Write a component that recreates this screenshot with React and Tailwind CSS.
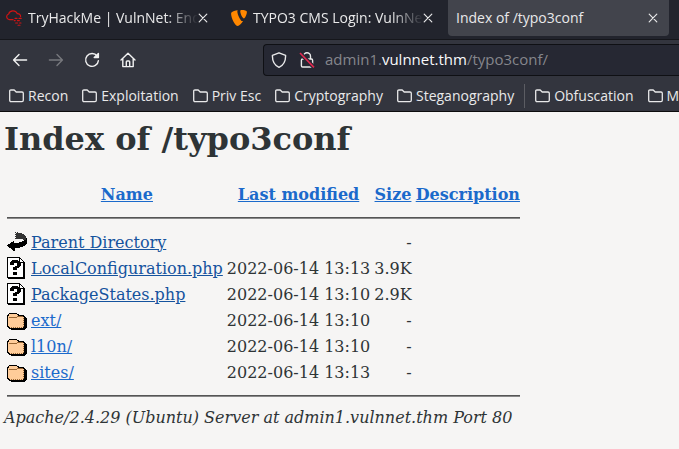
import React from "react";
import { SiTypo3 } from "react-icons/si";

const tabs = [
  { title: "TryHackMe | VulnNet: Endg", icon: "thm" },
  { title: "TYPO3 CMS Login: VulnNet", icon: "typo3" },
  { title: "Index of /typo3conf", active: true },
];

const bookmarks = ["Recon", "Exploitation", "Priv Esc", "Cryptography", "Steganography"];
const moreBookmarks = ["Obfuscation", "Misc"];

const files = [
  { icon: "back", name: "Parent Directory", date: "", size: "-", visited: true },
  { icon: "unknown", name: "LocalConfiguration.php", date: "2022-06-14 13:13", size: "3.9K", visited: true },
  { icon: "unknown", name: "PackageStates.php", date: "2022-06-14 13:10", size: "2.9K", visited: true },
  { icon: "folder", name: "ext/", date: "2022-06-14 13:10", size: "-" },
  { icon: "folder", name: "l10n/", date: "2022-06-14 13:10", size: "-" },
  { icon: "folder", name: "sites/", date: "2022-06-14 13:13", size: "-" },
];

function CloseIcon() {
  return (
    <svg viewBox="0 0 10 10" className="size-2.5" fill="none" stroke="currentColor" strokeWidth="1.2" strokeLinecap="round">
      <path d="M1.2 1.2 8.8 8.8M8.8 1.2 1.2 8.8" />
    </svg>
  );
}

function CloudLogo() {
  return (
    <svg viewBox="0 0 16 16" className="mr-1.5 size-4 shrink-0" fill="none" stroke="#cf1414" strokeWidth="1.2" strokeLinecap="round">
      <path d="M7 9.6H3.3A2.9 2.9 0 0 1 2.6 4 4.6 4.6 0 0 1 11.2 3.6 3 3 0 0 1 14.6 6.6" />
      <path d="M9 8.4H11M13 8.4H15.2M8.2 10.6H9.2M11.4 10.6H13.4M9.6 13H11.6M13.6 13H15M12 15.2H14" strokeWidth="1.1" />
    </svg>
  );
}

function Tab({ tab }) {
  return (
    <div
      className={
        "flex h-9 w-[221px] shrink-0 items-center rounded-b pr-[11px] pl-2 " +
        (tab.active ? "bg-[#42444c]" : "")
      }
    >
      {tab.icon === "thm" && <CloudLogo />}
      {tab.icon === "typo3" && <SiTypo3 className="mr-1.5 size-4 shrink-0 text-[#ff8700]" />}
      <button
        type="button"
        className={
          "min-w-0 flex-1 overflow-hidden text-left whitespace-nowrap " +
          (tab.active ? "" : "[mask-image:linear-gradient(to_left,transparent,black_32px)]")
        }
      >
        {tab.title}
      </button>
      <button type="button" aria-label="Close tab" className="shrink-0">
        <CloseIcon />
      </button>
    </div>
  );
}

function NavButton({ label, dim, children }) {
  return (
    <button
      type="button"
      aria-label={label}
      className={"flex size-8 shrink-0 items-center justify-center " + (dim ? "text-[#77787d]" : "text-[#f1f1f1]")}
    >
      <svg viewBox="0 0 16 16" className="size-4" fill="none" stroke="currentColor" strokeWidth="1.4" strokeLinecap="round" strokeLinejoin="round">
        {children}
      </svg>
    </button>
  );
}

function Bookmark({ label }) {
  return (
    <a href="#" className="flex shrink-0 items-center gap-1">
      <svg viewBox="0 0 15 14" className="h-3.5 w-[15px]" fill="none" stroke="currentColor" strokeWidth="1.3" strokeLinejoin="round">
        <path d="M.7 11.3V2.2Q.7 1 1.9 1H5.2L7.2 3H13Q14.3 3 14.3 4.2V11.3Q14.3 12.6 13 12.6H2Q.7 12.6 .7 11.3Z" />
      </svg>
      {label}
    </a>
  );
}

function FileIcon({ type }) {
  return (
    <svg viewBox="0 0 20 22" className="block h-[22px] w-5" shapeRendering="crispEdges">
      {type === "folder" && (
        <>
          <path fill="#000" d="M2 4H10V5H12V6H17V7H18V8H19V9H20V19H19V20H18V21H4V20H2V19H1V18H0V6H1V5H2Z" />
          <path fill="#fc9" d="M2 5H10V6H11V7H16V8H17V18H16V19H3V18H2V17H1V7H2Z" />
          <path fill="#963" d="M2 8H10V9H2ZM10 7H16V8H10ZM16 9h1v1h-1zM16 11h1v1h-1zM16 13h1v1h-1zM16 15h1v1h-1zM4 18h1v1h-1zM6 18h1v1h-1zM8 18h1v1h-1zM10 18h1v1h-1zM12 18h1v1h-1zM14 18h1v1h-1zM16 17h1v1h-1z" />
        </>
      )}
      {type === "unknown" && (
        <>
          <path fill="#000" d="M0 0H13V1H14V2H15V3H16V4H17V5H18V22H1V21H0Z" />
          <path fill="#fff" d="M1 1H12V6H16V20H1Z" />
          <path fill="#fff" d="M13 2H14V3H15V4H16V5H13Z" />
          <path fill="#000" d="M5 3H11V4H13V5H14V9H13V10H12V11H10V13H6V10H8V9H10V6H7V8H3V5H4V4H5ZM6 15H10V18H6Z" />
        </>
      )}
      {type === "back" && (
        <>
          <path fill="#333" d="M8 1H9V2H10V1H11V2H15V3H17V4H18V5H19V7H20V9H16V8H8V7H9V6H8V5H9V4H8V3H9V2H8Z" />
          <path fill="#000" d="M19 7H20V13H19V14H18V15H16V16H13V17H8V20H6V19H5V18H4V17H2V16H1V15H0V14H1V13H3V12H4V11H6V10H7V12H12V11H15V10H17V9H19Z" />
        </>
      )}
    </svg>
  );
}

function HeaderLink({ children }) {
  return (
    <th className="p-px align-middle font-bold">
      <a href="#" className="text-[#1b6acb] underline">{children}</a>
    </th>
  );
}

function Rule() {
  return (
    <tr>
      <th colSpan={5} className="p-px">
        <hr className="my-2 h-0.5 border-t border-b border-t-[#555] border-b-[#888]" />
      </th>
    </tr>
  );
}

export default function App() {
  return (
    <div className="flex min-h-screen flex-col overflow-hidden bg-[#f6f5f4]">
      <header className="border-b border-[#0c0c0d] bg-[#33353e] font-['Open_Sans','Noto_Sans',sans-serif] text-sm text-[#e9e9ea]">
        <div className="-ml-0.5 flex h-10 gap-1 overflow-hidden border-b border-[#15161b] bg-[#22242d]">
          {tabs.map((tab) => (
            <Tab key={tab.title} tab={tab} />
          ))}
        </div>

        <div className="flex h-10 items-center pl-1">
          <div className="flex w-[259px] shrink-0 gap-1">
            <NavButton label="Back">
              <path d="M14.6 8H1.8M7 2.6 1.6 8 7 13.4" />
            </NavButton>
            <NavButton label="Forward" dim>
              <path d="M1.4 8H14.2M9 2.6 14.4 8 9 13.4" />
            </NavButton>
            <NavButton label="Reload">
              <path d="M13.2 4.2A6.4 6.4 0 1 0 14.4 8.6" />
              <path d="M14.4 1.4V5.6H10.2Z" fill="currentColor" />
            </NavButton>
            <NavButton label="Home">
              <path d="M1 8 8 1.2 15 8M2.8 6.8V14.6H13.2V6.8M6.3 14.4V9.8Q6.3 9 7.1 9H8.9Q9.7 9 9.7 9.8V14.4" />
            </NavButton>
          </div>
          <div className="flex h-8 min-w-0 flex-1 items-center rounded-l border border-r-0 border-[#0f1014] bg-[#262833] pl-[7px]">
            <svg viewBox="0 0 16 16" className="mr-3 size-4 shrink-0" fill="none" stroke="currentColor" strokeWidth="1.4" strokeLinejoin="round">
              <path d="M8 .8 14.6 3.4Q14.8 12 8 15.3 1.2 12 1.4 3.4Z" />
            </svg>
            <svg viewBox="0 0 16 16" className="mr-2.5 size-4 shrink-0" fill="none" stroke="currentColor" strokeWidth="1.4">
              <path d="M4.5 7V4.3A3.5 3.5 0 0 1 11.5 4.3V7" />
              <rect x="2.4" y="7" width="11.2" height="8" rx="1.2" />
              <path d="M1 1 15 15.4" stroke="#262833" strokeWidth="4" />
              <path d="M1 1 15 15.4" stroke="#e22850" strokeWidth="1.6" />
            </svg>
            <button type="button" aria-label="Address" className="text-[15px] whitespace-nowrap text-[#85868c]">
              admin1.<span className="text-[#f9f9fa]">vulnnet.thm</span>/typo3conf/
            </button>
          </div>
        </div>

        <nav className="flex h-[31px] items-center gap-3.5 overflow-hidden pl-[9px] whitespace-nowrap">
          {bookmarks.map((label) => (
            <Bookmark key={label} label={label} />
          ))}
          <div className="-mx-1 h-6 w-px shrink-0 bg-[#5c5d63]" />
          {moreBookmarks.map((label) => (
            <Bookmark key={label} label={label} />
          ))}
        </nav>
      </header>

      <main className="px-1 pt-2 font-['DejaVu_Serif',serif] text-base leading-[19px] text-[#2e3436]">
        <h1 className="mb-[22px] text-[32px] leading-[38px] font-bold">Index of /typo3conf</h1>
        <table className="border-separate border-spacing-0.5 whitespace-nowrap">
          <thead>
            <tr>
              <th className="p-px" aria-label="Type">
                <div className="h-[22px] w-5" />
              </th>
              <HeaderLink>Name</HeaderLink>
              <HeaderLink>Last modified</HeaderLink>
              <HeaderLink>Size</HeaderLink>
              <HeaderLink>Description</HeaderLink>
            </tr>
          </thead>
          <tbody>
            <Rule />
            {files.map((file) => (
              <tr key={file.name}>
                <td className="p-px">
                  <FileIcon type={file.icon} />
                </td>
                <td className="p-px">
                  <a href="#" className={"underline " + (file.visited ? "text-[#15539e]" : "text-[#1b6acb]")}>
                    {file.name}
                  </a>
                </td>
                <td className="p-px text-right">{file.date}</td>
                <td className="p-px text-right">{file.size}</td>
                <td className="p-px" />
              </tr>
            ))}
            <Rule />
          </tbody>
        </table>
        <address className="italic">Apache/2.4.29 (Ubuntu) Server at admin1.vulnnet.thm Port 80</address>
      </main>
    </div>
  );
}
